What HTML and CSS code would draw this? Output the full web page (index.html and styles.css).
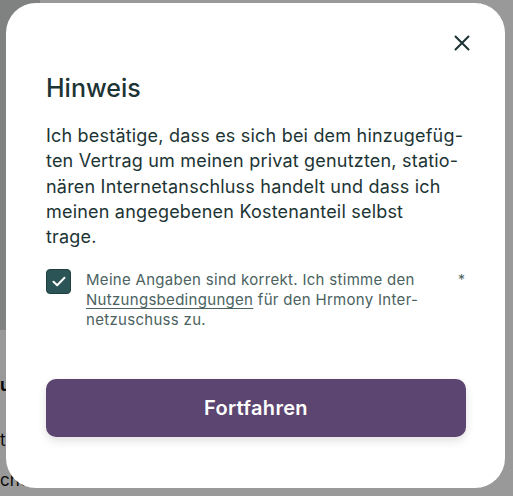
FILE: index.html
```html
<!DOCTYPE html>
<html lang="de">
<head>
<meta charset="utf-8">
<link rel="stylesheet" href="styles.css">
</head>
<body>
<div class="page">
  <div class="side"></div>
  <div class="page-text">
    <p class="pt bold">ur</p>
    <p class="pt gap1">t</p>
    <p class="pt gap2">che</p>
  </div>
</div>
<div class="overlay">
  <div class="modal" role="dialog" aria-labelledby="t">
    <div class="modal-head">
      <button class="close" aria-label="Schließen">
        <svg width="16" height="16" viewBox="0 0 16 16"><path d="M1.5 1.5 L14.5 14.5 M14.5 1.5 L1.5 14.5" stroke="#1d3333" stroke-width="2" stroke-linecap="round"/></svg>
      </button>
    </div>
    <h2 id="t" class="title">Hinweis</h2>
    <p class="body">Ich bestätige, dass es sich bei dem hinzugefüg-<br>ten Vertrag um meinen privat genutzten, statio-<br>nären Internetanschluss handelt und dass ich<br>meinen angegebenen Kostenanteil selbst<br>trage.</p>
    <label class="check-row">
      <span class="box"><svg width="14" height="11" viewBox="0 0 14 11"><path d="M1.5 5.8 L5.2 9.2 L12.5 1.8" fill="none" stroke="#fff" stroke-width="2" stroke-linecap="round" stroke-linejoin="round"/></svg></span>
      <span class="label">Meine Angaben sind korrekt. Ich stimme den<br><a href="#" class="link">Nutzungsbedingungen</a> für den Hrmony Inter-<br>netzuschuss zu.</span>
      <span class="req">*</span>
    </label>
    <button class="primary">Fortfahren</button>
  </div>
</div>
</body>
</html>
```

FILE: styles.css
```css
* { box-sizing: border-box; }
html, body { margin: 0; padding: 0; }
body {
  width: 513px;
  height: 496px;
  overflow: hidden;
  background: #fff;
  font-family: "Inter", "Liberation Sans", sans-serif;
}
.page {
  display: flex;
  flex-direction: column;
  height: 496px;
}
.side {
  width: 40px;
  height: 330px;
  background: #d5d7d7;
  border-bottom-right-radius: 14px;
  flex: none;
}
.page-text {
  padding-top: 45px;
}
.pt { margin: 0; font-size: 17px; line-height: 20px; color: #111; }
.bold { font-weight: 700; }
.gap1 { margin-top: 35px; }
.gap2 { margin-top: 20px; }
.overlay {
  position: fixed;
  inset: 0;
  background: rgba(0, 0, 0, 0.4);
  display: flex;
  align-items: flex-start;
}
.modal {
  margin: 3px 8px 0 6px;
  width: 499px;
  height: 485px;
  background: #fff;
  border-radius: 30px;
  padding: 32px 39px 0 40px;
  color: #1d3434;
}
.modal-head {
  display: flex;
  justify-content: flex-end;
  margin-right: -4px;
}
.close {
  border: 0;
  background: none;
  padding: 0;
  width: 16px;
  height: 16px;
  display: flex;
  cursor: pointer;
}
.title {
  margin: 21px 0 0;
  font-size: 25px;
  font-weight: 500;
  line-height: 32px;
}
.body {
  margin: 19px 0 0;
  font-size: 18px;
  letter-spacing: 0.2px;
  line-height: 25.3px;
  white-space: nowrap;
}
.check-row {
  display: flex;
  align-items: flex-start;
  margin-top: 18px;
}
.box {
  width: 25px;
  height: 25px;
  background: #2b5457;
  border: 1px solid #1f3f42;
  border-radius: 4px;
  display: flex;
  align-items: center;
  justify-content: center;
  flex: none;
  margin-top: 2px;
}
.label {
  margin-left: 15px;
  margin-top: 3px;
  font-size: 15px;
  letter-spacing: 0.3px;
  line-height: 20px;
  color: #4b6261;
  white-space: nowrap;
  flex: 1;
}
.link { color: #4b6261; text-decoration: underline; text-underline-offset: 3px; }
.req {
  font-size: 14px;
  color: #4b6261;
  margin-top: 4px;
  margin-right: 1px;
}
.primary {
  display: block;
  margin-top: 49px;
  width: 420px;
  height: 58px;
  border: 0;
  border-radius: 10px;
  background: #5c4570;
  color: #fff;
  font-family: inherit;
  font-size: 20px;
  letter-spacing: 0.3px;
  font-weight: 600;
  box-shadow: 0 4px 10px rgba(0, 0, 0, 0.12);
}
```
